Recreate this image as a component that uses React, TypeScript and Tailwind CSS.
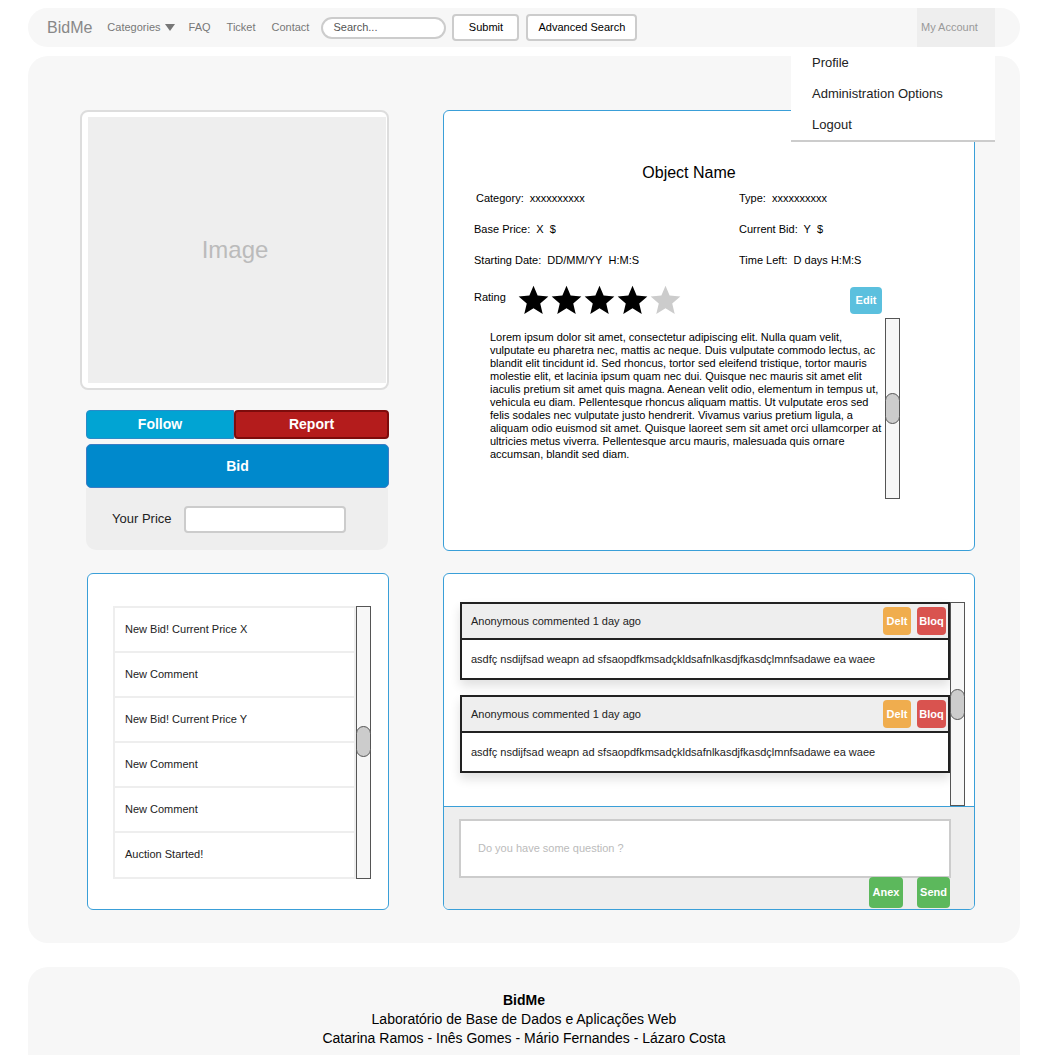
import React from 'react';

const description =
  'Lorem ipsum dolor sit amet, consectetur adipiscing elit. Nulla quam velit, vulputate eu pharetra nec, mattis ac neque. Duis vulputate commodo lectus, ac blandit elit tincidunt id. Sed rhoncus, tortor sed eleifend tristique, tortor mauris molestie elit, et lacinia ipsum quam nec dui. Quisque nec mauris sit amet elit iaculis pretium sit amet quis magna. Aenean velit odio, elementum in tempus ut, vehicula eu diam. Pellentesque rhoncus aliquam mattis. Ut vulputate eros sed felis sodales nec vulputate justo hendrerit. Vivamus varius pretium ligula, a aliquam odio euismod sit amet. Quisque laoreet sem sit amet orci ullamcorper at ultricies metus viverra. Pellentesque arcu mauris, malesuada quis ornare accumsan, blandit sed diam.';

const notifications = [
  'New Bid! Current Price X',
  'New Comment',
  'New Bid! Current Price Y',
  'New Comment',
  'New Comment',
  'Auction Started!',
];

const menuItems = [
  { label: 'Profile', h: 'h-[32px]' },
  { label: 'Administration Options', h: 'h-[30px]' },
  { label: 'Logout', h: 'h-[31px]' },
];

const Star: React.FC<{ filled: boolean }> = ({ filled }) => (
  <svg width="33" height="33" viewBox="0 0 24 24">
    <polygon
      points="12,1.2 15,8.4 22.8,9 16.9,14.1 18.7,21.8 12,17.7 5.3,21.8 7.1,14.1 1.2,9 9,8.4"
      fill={filled ? '#000000' : '#cccccc'}
    />
  </svg>
);

const Scrollbar: React.FC<{ height: string; thumbTop: string }> = ({ height, thumbTop }) => (
  <div className={`relative w-[15px] shrink-0 border border-[#555] bg-[#f7f7f7] ${height}`}>
    <div className={`absolute left-[-1px] h-[31px] w-[15px] rounded-full border border-[#555] bg-[#cccccc] ${thumbTop}`} />
  </div>
);

const Comment: React.FC = () => (
  <div className="border-2 border-[#222] bg-white shadow-[0_6px_10px_rgba(0,0,0,0.12)]">
    <div className="flex h-[36px] items-center border-b-2 border-[#222] bg-[#eeeeee] pl-[9px] pr-[2px]">
      <span className="text-[11px] text-[#222]">Anonymous commented 1 day ago</span>
      <div className="ml-auto flex gap-[6px]">
        <button className="h-[28px] w-[28px] rounded-[4px] bg-[#f0ad4e] text-[11px] font-bold text-white">Delt</button>
        <button className="h-[28px] w-[29px] rounded-[4px] bg-[#d9534f] text-[11px] font-bold text-white">Bloq</button>
      </div>
    </div>
    <div className="flex h-[38px] items-center pl-[9px] text-[11px] text-[#222]">
      asdfç nsdijfsad weapn ad sfsaopdfkmsadçkldsafnlkasdjfkasdçlmnfsadawe ea waee
    </div>
  </div>
);

const App: React.FC = () => {
  return (
    <div className="min-h-screen bg-white pt-[8px] font-['Liberation_Sans',Arial,sans-serif]">
      {/* Navbar */}
      <div className="relative ml-[28px] mr-[25px] flex h-[39px] items-center rounded-[20px] bg-[#f7f7f7] pl-[19px] pr-[25px]">
        <span className="text-[16px] text-[#888]">BidMe</span>
        <div className="ml-[15px] flex items-center gap-[4px] text-[11px] text-[#777]">
          <span>Categories</span>
          <svg width="10" height="7" viewBox="0 0 10 7">
            <polygon points="0,0 10,0 5,7" fill="#777" />
          </svg>
        </div>
        <span className="ml-[14px] text-[11px] text-[#777]">FAQ</span>
        <span className="ml-[16px] text-[11px] text-[#777]">Ticket</span>
        <span className="ml-[16px] text-[11px] text-[#777]">Contact</span>
        <div className="ml-[12px] flex h-[22px] w-[125px] items-center rounded-full border-2 border-[#ccc] bg-white pl-[10px] text-[11px] text-[#555]">
          Search...
        </div>
        <button className="ml-[6px] h-[27px] w-[67px] rounded-[4px] border-2 border-[#ccc] bg-white text-[11px] text-black">
          Submit
        </button>
        <button className="ml-[7px] h-[27px] w-[111px] rounded-[4px] border-2 border-[#ccc] bg-white text-[11px] text-black">
          Advanced Search
        </button>
        <div className="relative ml-auto flex h-full w-[78px] items-center bg-[#eeeeee] pl-[4px] text-[11px] text-[#999]">
          My Account
          <div className="absolute left-[-126px] top-[39px] z-10 w-[204px] border-b-2 border-[#ccc] bg-white">
            {menuItems.map((item) => (
              <div key={item.label} className={`flex items-center pl-[21px] text-[13px] text-[#222] ${item.h}`}>
                {item.label}
              </div>
            ))}
          </div>
        </div>
      </div>

      {/* Main */}
      <div className="ml-[28px] mr-[25px] mt-[9px] rounded-[20px] bg-[#f7f7f7] pb-[33px] pl-[52px] pr-[45px] pt-[54px]">
        <div className="flex gap-[54px]">
          {/* Left column */}
          <div className="w-[309px] shrink-0">
            <div className="h-[280px] rounded-[8px] border-2 border-[#ddd] bg-white pb-[5px] pl-[6px] pr-[1px] pt-[5px]">
              <div className="flex h-full items-center justify-center bg-[#eeeeee] pr-[4px] text-[24px] text-[#bbb]">Image</div>
            </div>
            <div className="ml-[6px] mt-[20px]">
              <div className="flex h-[29px]">
                <button className="w-[148px] rounded-l-[4px] border border-[#2a8bc8] bg-[#01a4d3] text-[14px] font-bold text-white">
                  Follow
                </button>
                <button className="flex-1 rounded-[4px] border-2 border-[#7d0c0c] bg-[#b41c1c] text-[14px] font-bold text-white">
                  Report
                </button>
              </div>
              <button className="mt-[5px] h-[44px] w-full rounded-[5px] border border-[#3b7cc4] bg-[#0089cc] text-[14px] font-bold text-white">
                Bid
              </button>
              <div className="flex h-[62px] w-[302px] items-center rounded-b-[10px] bg-[#eeeeee] pl-[26px]">
                <span className="text-[13px] text-[#222]">Your Price</span>
                <div className="ml-[12px] h-[27px] w-[162px] rounded-[4px] border-2 border-[#ccc] bg-white" />
              </div>
            </div>
          </div>

          {/* Object details */}
          <div className="h-[441px] flex-1 rounded-[6px] border border-[#3a9fd8] bg-white pt-[52px]">
            <div className="pr-[40px] text-center text-[16px] leading-[20px] text-black">Object Name</div>
            <div className="px-[30px] text-[11px] text-black">
              <div className="grid h-[31px] grid-cols-[265px_1fr] items-center">
                <span className="pl-[2px]">Category:&nbsp; xxxxxxxxxx</span>
                <span>Type:&nbsp; xxxxxxxxxx</span>
              </div>
              <div className="grid h-[31px] grid-cols-[265px_1fr] items-center">
                <span>Base Price:&nbsp; X&nbsp; $</span>
                <span>Current Bid:&nbsp; Y&nbsp; $</span>
              </div>
              <div className="grid h-[31px] grid-cols-[265px_1fr] items-center">
                <span>Starting Date:&nbsp; DD/MM/YY&nbsp; H:M:S</span>
                <span>Time Left:&nbsp; D days H:M:S</span>
              </div>
              <div className="mt-[8px] flex h-[32px] items-center">
                <span className="-mt-[6px] w-[43px]">Rating</span>
                {[true, true, true, true, false].map((f, i) => (
                  <Star key={i} filled={f} />
                ))}
                <button className="ml-[168px] h-[27px] w-[32px] rounded-[4px] bg-[#5bc0de] text-[11px] font-bold text-white">
                  Edit
                </button>
              </div>
            </div>
            <div className="mt-[2px] flex items-start">
              <p className="ml-[46px] mt-[13px] w-[392px] text-[11px] leading-[13px] text-black">{description}</p>
              <div className="ml-[3px]">
                <Scrollbar height="h-[181px]" thumbTop="top-[74px]" />
              </div>
            </div>
          </div>
        </div>

        <div className="mt-[22px] flex gap-[54px]">
          {/* Notifications */}
          <div className="ml-[7px] h-[337px] w-[302px] shrink-0 rounded-[6px] border border-[#3a9fd8] bg-white pl-[25px] pt-[32px]">
            <div className="flex">
              <div className="w-[243px] border-2 border-[#eee]">
                {notifications.map((n, i) => (
                  <div
                    key={i}
                    className={`flex items-center pl-[10px] text-[11px] text-[#222] ${i > 0 ? 'h-[45px] border-t-2 border-[#eee]' : 'h-[43px]'}`}
                  >
                    {n}
                  </div>
                ))}
              </div>
              <Scrollbar height="h-[273px]" thumbTop="top-[119px]" />
            </div>
          </div>

          {/* Comments */}
          <div className="flex h-[337px] flex-1 flex-col overflow-hidden rounded-[6px] border border-[#3a9fd8] bg-white">
            <div className="flex flex-1 pl-[16px] pt-[28px]">
              <div className="flex w-[490px] flex-col gap-[15px]">
                <Comment />
                <Comment />
              </div>
              <Scrollbar height="h-[204px]" thumbTop="top-[86px]" />
            </div>
            <div className="h-[104px] border-t border-[#3a9fd8] bg-[#eeeeee] pl-[15px] pt-[12px]">
              <div className="flex h-[59px] w-[492px] items-center border-2 border-[#ccc] bg-white pl-[17px] text-[11px] text-[#bbb]">
                Do you have some question ?
              </div>
              <div className="-mt-[1px] flex w-[491px] justify-end gap-[14px]">
                <button className="h-[31px] w-[34px] rounded-[4px] bg-[#5cb85c] text-[11px] font-bold text-white">Anex</button>
                <button className="h-[31px] w-[33px] rounded-[4px] bg-[#5cb85c] text-[11px] font-bold text-white">Send</button>
              </div>
            </div>
          </div>
        </div>
      </div>

      {/* Footer */}
      <div className="ml-[28px] mr-[25px] mt-[24px] rounded-t-[20px] bg-[#f7f7f7] pb-[24px] pt-[24px] text-center text-[14px] leading-[19px] text-black">
        <div className="font-bold">BidMe</div>
        <div>Laboratório de Base de Dados e Aplicações Web</div>
        <div>Catarina Ramos - Inês Gomes - Mário Fernandes - Lázaro Costa</div>
      </div>
    </div>
  );
};

export default App;
